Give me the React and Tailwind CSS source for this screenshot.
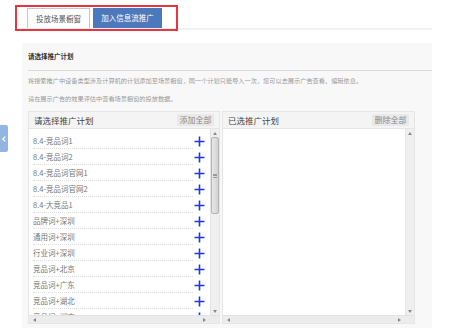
import React from 'react';

const plans = [
    '8.4-竞品词1',
    '8.4-竞品词2',
    '8.4-竞品词官网1',
    '8.4-竞品词官网2',
    '8.4-大竞品1',
    '品牌词+深圳',
    '通用词+深圳',
    '行业词+深圳',
    '竞品词+北京',
    '竞品词+广东',
    '竞品词+湖北',
    '竞品词+湖南',
];

const Arrow = ({ dir }) => {
    // tiny scrollbar arrow triangles
    const pts = {
        up: '0,3 2,0 4,3',
        down: '0,0 2,3 4,0',
        left: '3,0 0,2 3,4',
        right: '0,0 3,2 0,4',
    }[dir];
    const wide = dir === 'up' || dir === 'down';
    return (
        <svg width={wide ? 4 : 3} height={wide ? 3 : 4} viewBox={wide ? '0 0 4 3' : '0 0 3 4'}>
            <polygon points={pts} fill="#8a8a8a" />
        </svg>
    );
};

const Plus = () => (
    <svg width="11" height="11" viewBox="0 0 11 11">
        <path d="M5.5 0.5V10.5M0.5 5.5H10.5" stroke="#1f35e8" strokeWidth="1.6" />
    </svg>
);

const VScroll = ({ thumb }) => (
    <div className="w-[9px] flex flex-col items-center bg-[#efefef] border-l border-[#e4e4e4]">
        <div className="h-[8px] flex items-center justify-center"><Arrow dir="up" /></div>
        {thumb ? (
            <div className="w-[8px] h-[77px] rounded-[2px] border border-[#b4b4b4] bg-gradient-to-r from-[#e8e8e8] to-[#d2d2d2] flex items-center justify-center">
                <div className="w-[4px] h-[4px] border-y border-[#999] flex items-center">
                    <div className="w-full h-px bg-[#999]" />
                </div>
            </div>
        ) : null}
        <div className="flex-1" />
        <div className="h-[8px] flex items-center justify-center"><Arrow dir="down" /></div>
    </div>
);

const HScroll = () => (
    <div className="h-[8px] flex items-center bg-[#ececec] border-t border-[#e2e2e2]">
        <div className="w-[8px] flex justify-center ml-[1px]"><Arrow dir="left" /></div>
        <div className="flex-1" />
        <div className="w-[8px] flex justify-center mr-[11px]"><Arrow dir="right" /></div>
    </div>
);

const Box = ({ title, action, width, children, thumb }) => (
    <div className={`${width} h-[213px] flex flex-col bg-white border border-[#e6e6e6]`}>
        <div className="h-[17px] flex items-center justify-between bg-[#f4f4f4] border-b border-[#e6e6e6] pl-[5px] pr-[5px]">
            <span className="text-[8.5px] text-[#444] leading-none">{title}</span>
            <span className="h-[12px] px-[2.5px] flex items-center bg-[#e9e9e9] text-[8px] text-[#8a8a8a] leading-none">{action}</span>
        </div>
        <div className="flex-1 flex min-h-0">
            <div className="flex-1 overflow-hidden">{children}</div>
            <VScroll thumb={thumb} />
        </div>
        <HScroll />
    </div>
);

export default function App() {
    return (
        <div className="relative w-[465px] h-[336px] bg-white overflow-hidden font-['Noto_Sans_CJK_SC','Noto_Sans',sans-serif]">
            {/* side collapse handle */}
            <div className="absolute left-0 top-[125px] w-[8px] h-[27px] bg-[#93b5e2] rounded-r-[2px] flex items-center justify-center">
                <svg width="4" height="6" viewBox="0 0 4 6">
                    <path d="M3.2 0.6L0.9 3L3.2 5.4" stroke="#fff" strokeWidth="1.3" fill="none" />
                </svg>
            </div>

            {/* tabs */}
            <div className="ml-[15px] w-[417px] h-[30px] border-b-2 border-[#f1f1f1] pt-[8px] pl-[12px] flex gap-[3px]">
                <div className="w-[63px] h-[20px] bg-white border border-b-0 border-[#b9c9de] flex items-center justify-center text-[7.5px] text-[#555]">
                    投放场景橱窗
                </div>
                <div className="w-[69px] h-[20px] bg-[#4b79bd] flex items-center justify-center text-[7.5px] text-white">
                    加入信息流推广
                </div>
            </div>
            <div className="absolute left-[15px] top-[5px] w-[163px] h-[26px] border-2 border-[#e8343c]" />

            {/* panel */}
            <div className="ml-[22px] mt-[13px] w-[410px] h-[285px] bg-[#f8f8f8] pl-[6px]">
                <div className="h-[28px] flex items-center border-b border-[#dcdcdc]">
                    <span className="text-[6.5px] font-bold text-[#333]">请选择推广计划</span>
                </div>
                <div className="pt-[1px] text-[6.2px] text-[#9a9a9a] leading-[18px]">
                    <div>将搜索推广中设备类型涉及计算机的计划添加至场景橱窗，同一个计划只能导入一次，您可以去展示广告查看、编辑依息。</div>
                    <div>请在展示广告的效果评估中查看场景橱窗的投放数据。</div>
                </div>
                <div className="mt-[3px] flex gap-[2px]">
                    <Box title="请选择推广计划" action="添加全部" width="w-[192px]" thumb>
                        <div className="pt-[4px] pl-[4px]">
                            {plans.map((p) => (
                                <div key={p} className="h-[16px] flex items-center">
                                    <div className="w-[160px] h-[16px] flex items-center border-b border-dotted border-[#dedede] text-[7.5px] text-[#777] leading-none">
                                        {p}
                                    </div>
                                    <div className="ml-[1px] flex items-center">
                                        <Plus />
                                    </div>
                                </div>
                            ))}
                        </div>
                    </Box>
                    <Box title="已选推广计划" action="删除全部" width="w-[193px]" />
                </div>
            </div>
        </div>
    );
}
